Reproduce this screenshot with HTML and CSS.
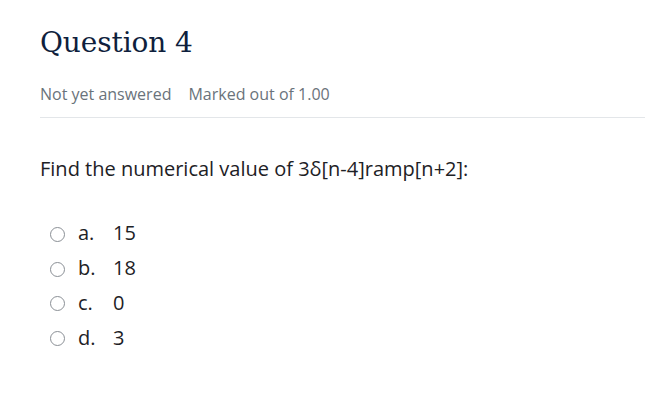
FILE: index.html
```html
<!DOCTYPE html>
<html lang="en">
<head>
<meta charset="utf-8">
<title>Question 4</title>
<link rel="stylesheet" href="styles.css">
</head>
<body>
<div class="que">
  <h3 class="qno">Question 4</h3>
  <div class="info">
    <span class="state">Not yet answered</span>
    <span class="grade">Marked out of 1.00</span>
  </div>
  <div class="content">
    <p class="qtext">Find the numerical value of 3δ[n-4]ramp[n+2]:</p>
    <div class="answers">
      <label class="opt"><span class="radio"></span><span class="num">a.</span><span class="val">15</span></label>
      <label class="opt"><span class="radio"></span><span class="num">b.</span><span class="val">18</span></label>
      <label class="opt"><span class="radio"></span><span class="num">c.</span><span class="val">0</span></label>
      <label class="opt"><span class="radio"></span><span class="num">d.</span><span class="val">3</span></label>
    </div>
  </div>
</div>
</body>
</html>
```

FILE: styles.css
```css
html, body {
  margin: 0;
  padding: 0;
  background: #ffffff;
}
body {
  font-family: "Open Sans", "Liberation Sans", sans-serif;
  color: #1d2125;
}
.que {
  padding: 26px 0 0 40px;
}
.qno {
  margin: 0;
  font-family: "DejaVu Serif", "Liberation Serif", serif;
  font-weight: normal;
  font-size: 28px;
  line-height: 33.6px;
  color: #0f1f3d;
  letter-spacing: -0.1px;
}
.info {
  display: flex;
  gap: 17px;
  margin-top: 22px;
  font-size: 16px;
  line-height: 24px;
  color: #6a737b;
  padding-bottom: 11px;
  border-bottom: 1px solid #e3e6e9;
}
.qtext {
  margin: 36px 0 0 0;
  font-size: 20px;
  line-height: 30px;
  color: #1d2125;
}
.answers {
  margin-top: 32.5px;
}
.opt {
  display: flex;
  align-items: center;
  height: 34.7px;
  font-size: 20px;
  line-height: 30px;
}
.radio {
  box-sizing: border-box;
  width: 15px;
  height: 15px;
  border: 1px solid #8a8f95;
  border-radius: 50%;
  margin-left: 10px;
  margin-right: 13px;
  position: relative;
  top: 1px;
}
.num {
  width: 35px;
}
```
